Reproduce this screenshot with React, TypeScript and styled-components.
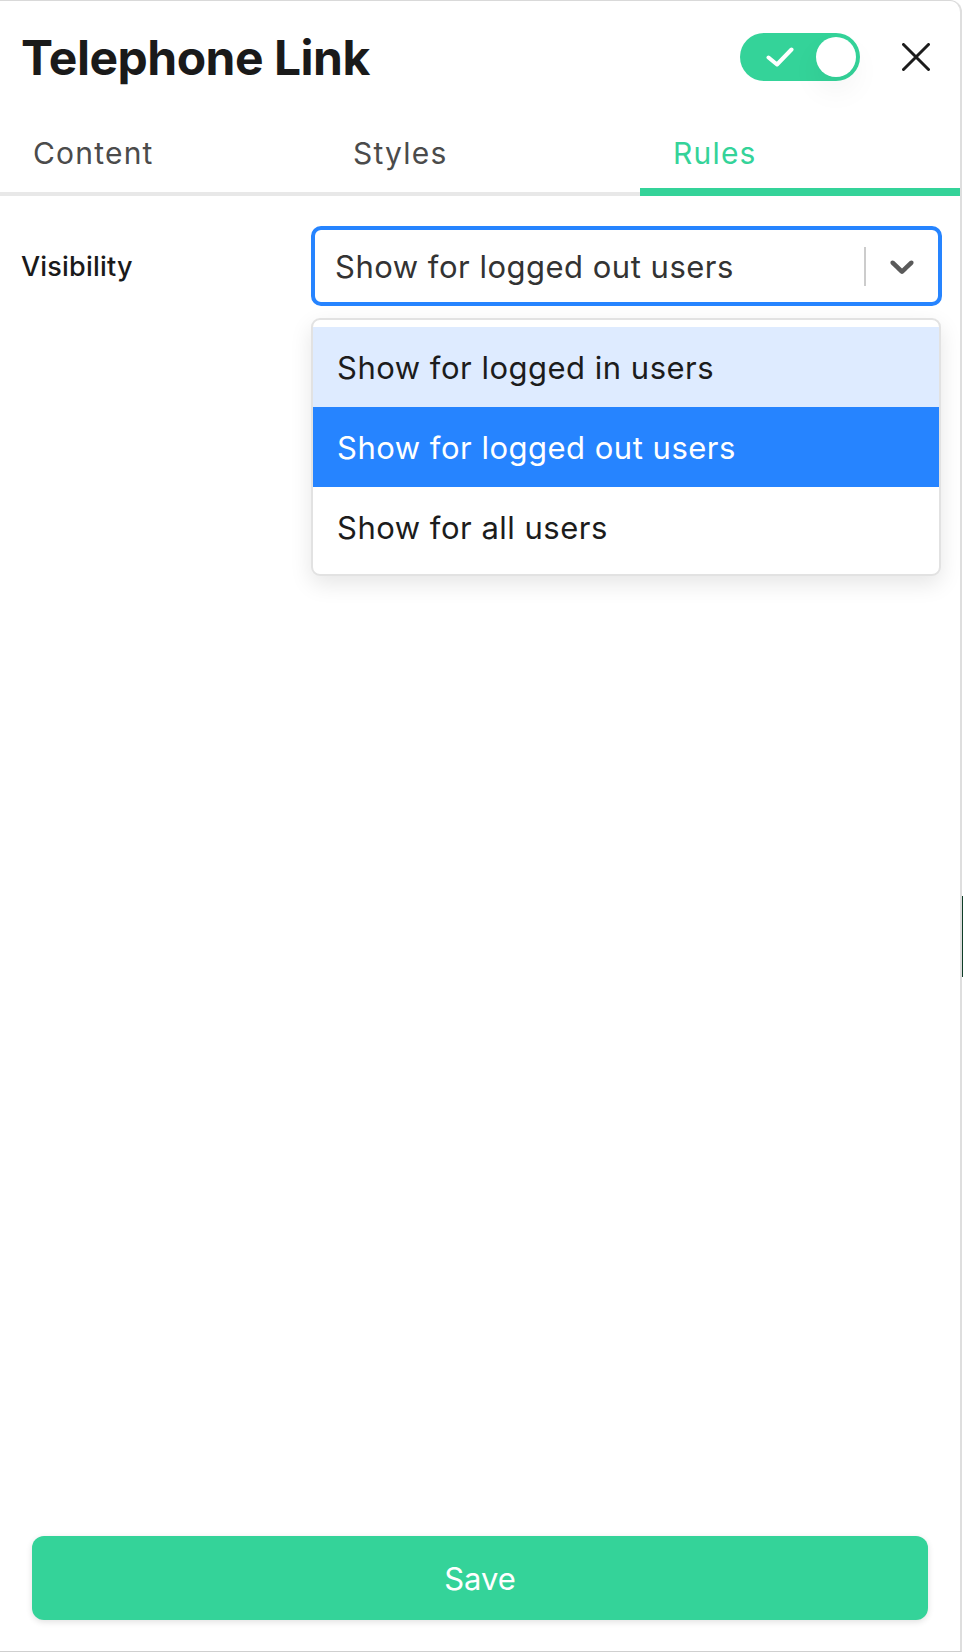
import React from "react";
import styled, { createGlobalStyle } from "styled-components";

const GREEN = "#34d399";
const BLUE = "#2684ff";

const Global = createGlobalStyle`
  html, body { margin: 0; padding: 0; background: #ffffff; }
  body { font-family: Inter, "Noto Sans", "Liberation Sans", sans-serif; -webkit-font-smoothing: antialiased; }
  * { box-sizing: border-box; }
`;

const Page = styled.div`
  display: flex;
  align-items: flex-start;
  width: 963px;
  height: 1652px;
  overflow: hidden;
`;

const Panel = styled.section`
  width: 962px;
  height: 1652px;
  display: flex;
  flex-direction: column;
  border-top: 1px solid #d9d9d9;
  border-right: 2px solid #dedede;
  border-bottom: 1px solid #cfcfcf;
  border-top-right-radius: 12px;
  background: #fff;
`;

const EdgeMark = styled.div`
  width: 1px;
  height: 81px;
  margin-top: 896px;
  background: #0f3d27;
`;

const Header = styled.header`
  height: 112px;
  display: flex;
  align-items: center;
  justify-content: space-between;
  padding: 0 30px 0 21px;
`;

const Title = styled.h1`
  margin: 0;
  font-size: 48px;
  font-weight: 700;
  color: #1a1a1a;
  letter-spacing: -0.5px;
`;

const HeaderActions = styled.div`
  display: flex;
  align-items: center;
  gap: 42px;
`;

const Toggle = styled.button`
  width: 120px;
  height: 48px;
  border-radius: 24px;
  border: none;
  background: ${GREEN};
  display: flex;
  align-items: center;
  padding: 0 4px 0 26px;
  cursor: pointer;
`;

const Knob = styled.span`
  width: 40px;
  height: 40px;
  border-radius: 50%;
  background: #fff;
  margin-left: auto;
  box-shadow: 0 14px 30px rgba(0, 0, 0, 0.05);
`;

const CloseButton = styled.button`
  width: 28px;
  height: 28px;
  padding: 0;
  border: none;
  background: none;
  display: flex;
  cursor: pointer;
`;

const TabBar = styled.nav`
  display: grid;
  grid-template-columns: 320px 320px 1fr;
  border-bottom: 4px solid #e8e8e8;
`;

const Tab = styled.button<{ $active?: boolean }>`
  position: relative;
  height: 79px;
  display: flex;
  align-items: center;
  padding: 0 0 0 33px;
  border: none;
  background: none;
  font-family: inherit;
  font-size: 30px;
  font-weight: 400;
  letter-spacing: 1.2px;
  color: ${(p) => (p.$active ? GREEN : "#4b4b4b")};
  cursor: pointer;
  &::after {
    content: "";
    display: ${(p) => (p.$active ? "block" : "none")};
    position: absolute;
    left: 0;
    right: 0;
    bottom: -4px;
    height: 8px;
    background: ${GREEN};
  }
`;

const Body = styled.main`
  flex: 1;
  padding: 30px 18px 0 21px;
`;

const FieldRow = styled.div`
  display: flex;
  align-items: center;
`;

const Label = styled.label`
  width: 290px;
  font-size: 27px;
  font-weight: 500;
  letter-spacing: 0.2px;
  color: #1a1a1a;
`;

const SelectWrap = styled.div`
  position: relative;
  flex: 1;
`;

const Control = styled.div`
  height: 80px;
  display: flex;
  align-items: center;
  border: 4px solid ${BLUE};
  border-radius: 10px;
  background: #fff;
`;

const Value = styled.div`
  flex: 1;
  padding: 0 16px 0 20px;
  font-size: 31px;
  letter-spacing: 0.5px;
  color: #333333;
  white-space: nowrap;
`;

const Separator = styled.span`
  width: 2px;
  height: 39px;
  background: #cccccc;
`;

const Indicator = styled.span`
  display: flex;
  padding: 0 16px;
  color: #5a5a5a;
`;

const Menu = styled.ul`
  position: absolute;
  top: calc(100% + 12px);
  left: 0;
  right: 1px;
  margin: 0;
  padding: 7px 0;
  list-style: none;
  background: #fff;
  border: 2px solid #e2e2e2;
  border-radius: 9px;
  box-shadow: 0 8px 22px rgba(0, 0, 0, 0.1);
  z-index: 5;
`;

const Option = styled.li<{ $state?: "focused" | "selected" }>`
  height: 80px;
  display: flex;
  align-items: center;
  padding: 0 24px;
  font-size: 31px;
  letter-spacing: 0.5px;
  color: ${(p) => (p.$state === "selected" ? "#ffffff" : "#1c1c1c")};
  background: ${(p) =>
    p.$state === "selected" ? BLUE : p.$state === "focused" ? "#deebff" : "transparent"};
`;

const Footer = styled.footer`
  padding: 0 32px 31px;
`;

const SaveButton = styled.button`
  width: 100%;
  height: 84px;
  border: none;
  border-radius: 12px;
  background: ${GREEN};
  color: #ffffff;
  font-family: inherit;
  font-size: 31px;
  font-weight: 400;
  box-shadow: 0 2px 6px rgba(0, 0, 0, 0.12);
  cursor: pointer;
`;

export default function App() {
  return (
    <>
      <Global />
      <Page>
        <Panel>
          <Header>
            <Title>Telephone Link</Title>
            <HeaderActions>
              <Toggle aria-label="Enabled">
                <svg width="28" height="20" viewBox="0 0 28 20" fill="none">
                  <polyline
                    points="2.5,10.5 11,17.5 25.5,2.5"
                    stroke="#fff"
                    strokeWidth="4"
                    strokeLinecap="round"
                    strokeLinejoin="round"
                  />
                </svg>
                <Knob />
              </Toggle>
              <CloseButton aria-label="Close">
                <svg width="28" height="28" viewBox="0 0 28 28" fill="none">
                  <path d="M1.5 1.5 L26.5 26.5 M26.5 1.5 L1.5 26.5" stroke="#1c1c1c" strokeWidth="3" strokeLinecap="round" />
                </svg>
              </CloseButton>
            </HeaderActions>
          </Header>
          <TabBar>
            <Tab>Content</Tab>
            <Tab>Styles</Tab>
            <Tab $active>Rules</Tab>
          </TabBar>
          <Body>
            <FieldRow>
              <Label>Visibility</Label>
              <SelectWrap>
                <Control>
                  <Value>Show for logged out users</Value>
                  <Separator />
                  <Indicator>
                    <svg width="40" height="40" viewBox="0 0 20 20" fill="currentColor">
                      <path d="M4.516 7.548c0.436-0.446 1.043-0.481 1.576 0l3.908 3.747 3.908-3.747c0.533-0.481 1.141-0.446 1.574 0 0.436 0.445 0.408 1.197 0 1.615-0.406 0.418-4.695 4.502-4.695 4.502-0.217 0.223-0.502 0.335-0.787 0.335s-0.57-0.112-0.789-0.335c0 0-4.287-4.084-4.695-4.502s-0.436-1.170 0-1.615z" />
                    </svg>
                  </Indicator>
                </Control>
                <Menu>
                  <Option $state="focused">Show for logged in users</Option>
                  <Option $state="selected">Show for logged out users</Option>
                  <Option>Show for all users</Option>
                </Menu>
              </SelectWrap>
            </FieldRow>
          </Body>
          <Footer>
            <SaveButton>Save</SaveButton>
          </Footer>
        </Panel>
        <EdgeMark />
      </Page>
    </>
  );
}
